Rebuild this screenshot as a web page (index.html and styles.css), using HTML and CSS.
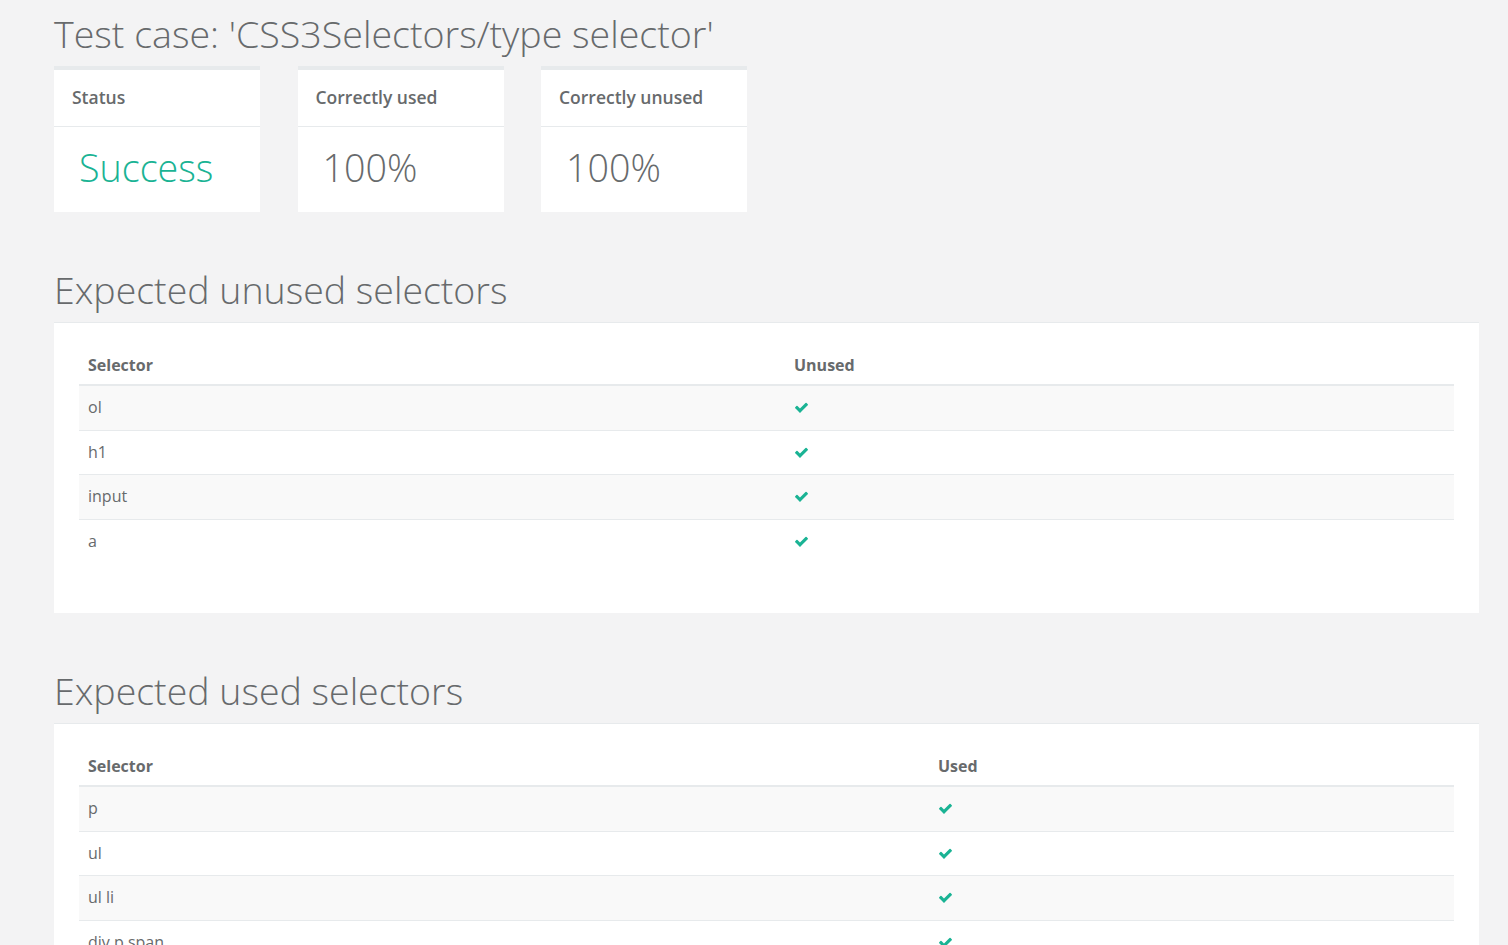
FILE: index.html
```html
<!DOCTYPE html>
<html>
<head>
<meta charset="utf-8">
<link rel="stylesheet" href="styles.css">
</head>
<body>
<div class="page">
  <h1 class="title">Test case: 'CSS3Selectors/type selector'</h1>
  <div class="cards">
    <div class="card">
      <div class="card-head">Status</div>
      <div class="card-body success">Success</div>
    </div>
    <div class="card">
      <div class="card-head">Correctly used</div>
      <div class="card-body">100%</div>
    </div>
    <div class="card">
      <div class="card-head">Correctly unused</div>
      <div class="card-body">100%</div>
    </div>
  </div>

  <h2 class="section-title">Expected unused selectors</h2>
  <div class="panel">
    <table class="tbl tbl-unused">
      <thead><tr><th class="c1">Selector</th><th>Unused</th></tr></thead>
      <tbody>
        <tr><td>ol</td><td><svg class="chk" viewBox="0 0 1792 1792"><path d="M1671 566q0 40-28 68l-724 724-136 136q-28 28-68 28t-68-28l-136-136-362-362q-28-28-28-68t28-68l136-136q28-28 68-28t68 28l294 295 656-657q28-28 68-28t68 28l136 136q28 28 28 68z"/></svg></td></tr>
        <tr><td>h1</td><td><svg class="chk" viewBox="0 0 1792 1792"><path d="M1671 566q0 40-28 68l-724 724-136 136q-28 28-68 28t-68-28l-136-136-362-362q-28-28-28-68t28-68l136-136q28-28 68-28t68 28l294 295 656-657q28-28 68-28t68 28l136 136q28 28 28 68z"/></svg></td></tr>
        <tr><td>input</td><td><svg class="chk" viewBox="0 0 1792 1792"><path d="M1671 566q0 40-28 68l-724 724-136 136q-28 28-68 28t-68-28l-136-136-362-362q-28-28-28-68t28-68l136-136q28-28 68-28t68 28l294 295 656-657q28-28 68-28t68 28l136 136q28 28 28 68z"/></svg></td></tr>
        <tr><td>a</td><td><svg class="chk" viewBox="0 0 1792 1792"><path d="M1671 566q0 40-28 68l-724 724-136 136q-28 28-68 28t-68-28l-136-136-362-362q-28-28-28-68t28-68l136-136q28-28 68-28t68 28l294 295 656-657q28-28 68-28t68 28l136 136q28 28 28 68z"/></svg></td></tr>
      </tbody>
    </table>
  </div>

  <h2 class="section-title">Expected used selectors</h2>
  <div class="panel">
    <table class="tbl tbl-used">
      <thead><tr><th class="c1">Selector</th><th>Used</th></tr></thead>
      <tbody>
        <tr><td>p</td><td><svg class="chk" viewBox="0 0 1792 1792"><path d="M1671 566q0 40-28 68l-724 724-136 136q-28 28-68 28t-68-28l-136-136-362-362q-28-28-28-68t28-68l136-136q28-28 68-28t68 28l294 295 656-657q28-28 68-28t68 28l136 136q28 28 28 68z"/></svg></td></tr>
        <tr><td>ul</td><td><svg class="chk" viewBox="0 0 1792 1792"><path d="M1671 566q0 40-28 68l-724 724-136 136q-28 28-68 28t-68-28l-136-136-362-362q-28-28-28-68t28-68l136-136q28-28 68-28t68 28l294 295 656-657q28-28 68-28t68 28l136 136q28 28 28 68z"/></svg></td></tr>
        <tr><td>ul li</td><td><svg class="chk" viewBox="0 0 1792 1792"><path d="M1671 566q0 40-28 68l-724 724-136 136q-28 28-68 28t-68-28l-136-136-362-362q-28-28-28-68t28-68l136-136q28-28 68-28t68 28l294 295 656-657q28-28 68-28t68 28l136 136q28 28 28 68z"/></svg></td></tr>
        <tr><td>div p span</td><td><svg class="chk" viewBox="0 0 1792 1792"><path d="M1671 566q0 40-28 68l-724 724-136 136q-28 28-68 28t-68-28l-136-136-362-362q-28-28-28-68t28-68l136-136q28-28 68-28t68 28l294 295 656-657q28-28 68-28t68 28l136 136q28 28 28 68z"/></svg></td></tr>
      </tbody>
    </table>
  </div>
</div>
</body>
</html>
```

FILE: styles.css
```css
html, body {
  margin: 0;
  padding: 0;
  background: #f3f3f4;
}
body {
  font-family: "Open Sans", "Noto Sans", sans-serif;
  color: #676a6c;
}
.page {
  margin-left: 54px;
  width: 1425px;
  padding-top: 13px;
}
.title {
  margin: 0;
  font-size: 37.6px;
  font-weight: 300;
  line-height: 42px;
  color: #676a6c;
}
.cards {
  display: flex;
  gap: 37.5px;
  margin-top: 11px;
}
.card {
  width: 206px;
  background: #fff;
  border-top: 4px solid #e7eaec;
}
.card-head {
  height: 57px;
  box-sizing: border-box;
  border-bottom: 1px solid #e7eaec;
  padding: 15px 18px 0;
  font-size: 17.5px;
  font-weight: 600;
  line-height: 24px;
}
.card-body {
  height: 85px;
  box-sizing: border-box;
  padding: 18px 25px 0;
  font-size: 37.7px;
  font-weight: 300;
  line-height: 46px;
  color: #676a6c;
}
.card-body.success {
  color: #1ab394;
}
.section-title {
  margin: 58px 0 0;
  font-size: 37.5px;
  font-weight: 300;
  line-height: 40px;
  height: 52px;
  color: #676a6c;
}
.panel {
  background: #fff;
  border-top: 1px solid #e7eaec;
  padding: 25px 25px 25px;
}
.tbl {
  width: 100%;
  border-collapse: collapse;
  margin-bottom: 25px;
  font-size: 16px;
}
.tbl-unused .c1 { width: 688px; }
.tbl-used .c1 { width: 832px; }
.tbl th {
  text-align: left;
  font-weight: 700;
  padding: 6px 9px 8px;
  line-height: 22px;
  border-bottom: 2px solid #e7eaec;
}
.tbl td {
  padding: 11px 9px;
  line-height: 21.5px;
  border-top: 1px solid #e7eaec;
  vertical-align: middle;
}
.tbl tbody tr:first-child td {
  border-top: 0;
}
.tbl tbody tr:nth-child(odd) {
  background: #f9f9f9;
}
.chk {
  width: 15px;
  height: 15px;
  fill: #1ab394;
  display: block;
}
```
